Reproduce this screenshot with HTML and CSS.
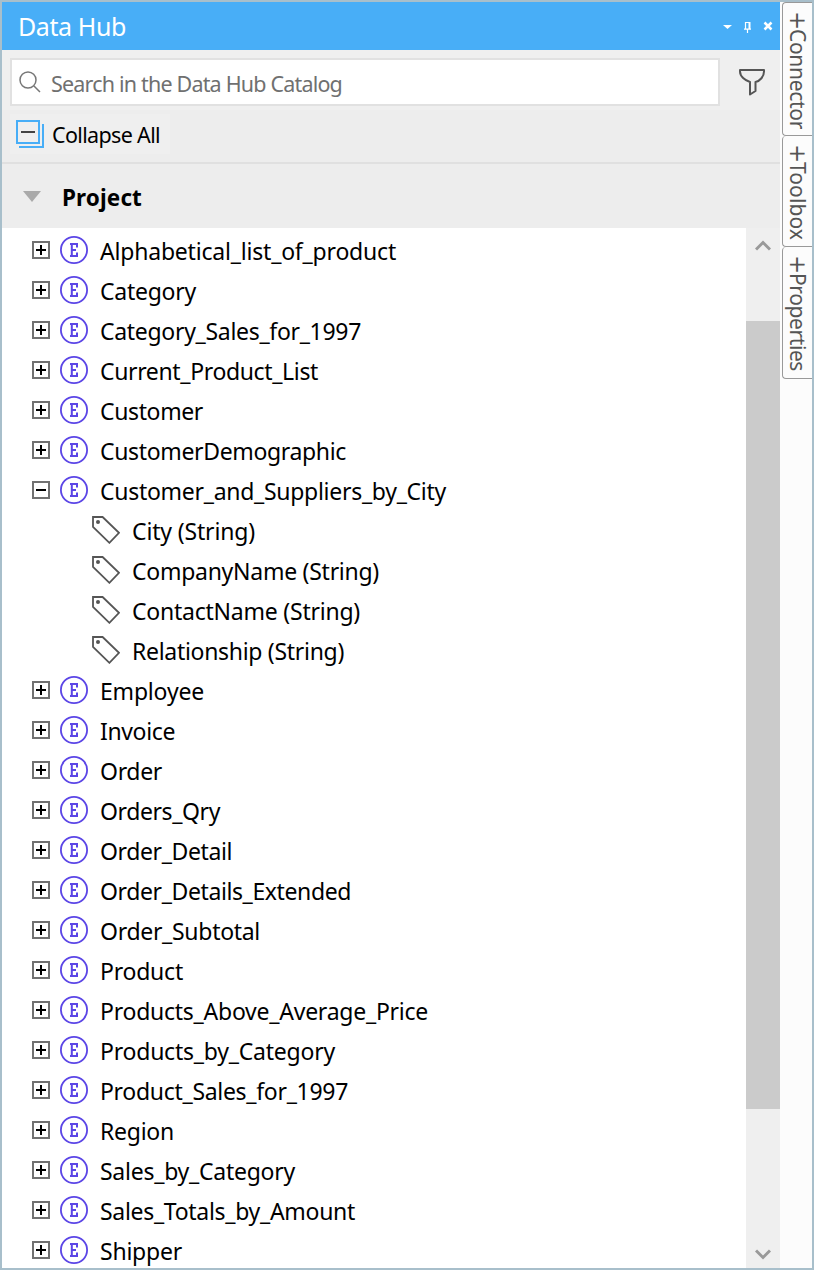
FILE: index.html
```html
<!DOCTYPE html>
<html lang="en">
<head>
<meta charset="utf-8">
<title>Data Hub</title>
<link rel="stylesheet" href="styles.css">
</head>
<body>
<svg class="defs" width="0" height="0">
  <symbol id="plus" viewBox="0 0 18 18"><path d="M1 1h16v16H1z" fill="#fff" stroke="#717171" stroke-width="2"/><path d="M4 9h10M9 4v10" stroke="#000" stroke-width="2"/></symbol>
  <symbol id="minus" viewBox="0 0 18 18"><path d="M1 1h16v16H1z" fill="#fff" stroke="#717171" stroke-width="2"/><path d="M4 9h10" stroke="#000" stroke-width="2"/></symbol>
  <symbol id="entity" viewBox="0 0 28 28"><circle cx="14" cy="14" r="13.1" fill="#fff" stroke="#5b45e6" stroke-width="1.8"/><path d="M17 11.500V8H10M17 16.500V20H10M11.800 8v12M12 14h4" fill="none" stroke="#5b45e6" stroke-width="2"/></symbol>
  <symbol id="tag" viewBox="0 0 28 28"><path d="M1 1h9.6L27 16.8 17.4 26.8 1 10.8z" fill="none" stroke="#555" stroke-width="1.8"/><circle cx="6" cy="6" r="2" fill="#555"/></symbol>
</svg>
<div class="window">
  <main class="panel">
    <header class="titlebar">
      <h1 class="title" data-width="108">Data Hub</h1>
      <svg class="controls" width="60" height="20" viewBox="0 0 60 20" fill="none" stroke="#fff"><path d="M4 10h9l-4.500 4z" fill="#fff" stroke="none"/><path d="M26.500 14V7.500h4" stroke-width="1.200"/><path d="M30.500 7v7" stroke-width="2"/><path d="M25 14.200h7M28.500 14v4" stroke-width="1.200"/><path d="M45.500 7.500l7 7M52.500 7.500l-7 7" stroke-width="2.500"/></svg>
    </header>
    <div class="search-row">
      <div class="search">
        <svg width="22" height="22" viewBox="0 0 22 22" fill="none" stroke="#777" stroke-width="1.500"><circle cx="9" cy="9" r="8"/><path d="M15 15l6 6"/></svg>
        <span class="placeholder" data-width="291">Search in the Data Hub Catalog</span>
      </div>
      <svg class="filter" width="28" height="28" viewBox="0 0 28 28" fill="none" stroke="#555" stroke-width="2" stroke-linejoin="round"><path d="M2 2h24v1.500c0 5-4 9.500-8.500 10.500v9L12 26.500V14C7 12.500 2 8.500 2 3.500z"/></svg>
    </div>
    <div class="toolbar">
      <button class="collapse">
        <svg width="28" height="28" viewBox="0 0 28 28" fill="none" stroke="#48aef7" stroke-width="2"><path d="M1 1h22v22H1zM27 4v23H3"/><path d="M5 12h14" stroke="#444"/></svg>
        <span data-width="108">Collapse All</span>
      </button>
    </div>
    <div class="section">
      <svg width="18" height="11" viewBox="0 0 18 11"><path d="M0 0h18L9 11z" fill="#aaa"/></svg>
      <h2 class="section-name" data-width="80">Project</h2>
    </div>
    <div class="content">
      <div class="tree" id="tree"></div>
      <div class="scrollbar">
        <svg width="16" height="11" viewBox="0 0 16 11" fill="none" stroke="#999" stroke-width="3"><path d="M1 9.500l7-7 7 7"/></svg>
        <div class="thumb"></div>
        <svg width="16" height="11" viewBox="0 0 16 11" fill="none" stroke="#999" stroke-width="3"><path d="M1 1.500l7 7 7-7"/></svg>
      </div>
    </div>
  </main>
  <aside class="tabs">
    <div class="tab tab-connector"><span class="add">+</span><span data-height="100">Connector</span></div>
    <div class="tab tab-toolbox"><span class="add">+</span><span data-height="78">Toolbox</span></div>
    <div class="tab tab-properties"><span class="add">+</span><span data-height="98">Properties</span></div>
  </aside>
</div>
<script src="tree.js"></script>
</body>
</html>
```
FILE: styles.css
```css
* { box-sizing: border-box; }
body { margin: 0; background: #a8bfcb; color: #000; font-family: "Noto Sans", "Open Sans", sans-serif; font-size: 23px; }
svg { display: block; flex: none; }
.defs { position: absolute; }
.window { display: flex; width: 814px; height: 1270px; border: 2px solid #a8bfcb; background: #fcfcfc; }
.panel { display: flex; flex-direction: column; width: 778px; background: #ededed; white-space: nowrap; }
.titlebar { display: flex; align-items: center; justify-content: space-between; height: 48px; flex: none; padding: 0 1px 0 16px; background: #48aef7; color: #fff; }
.title { margin: 0; font-size: 25px; font-weight: 400; line-height: 48px; }
.controls { margin-bottom: 2px; }
.search-row { display: flex; align-items: flex-start; height: 60px; flex: none; padding: 8px 14px 0 8px; background: #efefef; }
.search { display: flex; align-items: center; gap: 10px; width: 710px; height: 48px; padding-left: 7px; border: 2px solid #e1e1e1; background: #fff; }
.search svg { margin-bottom: 1px; }
.placeholder { color: #707070; font-size: 21.500px; line-height: 41px; padding-top: 3px; }
.filter { margin: 10px 0 0 18px; }
.toolbar { height: 54px; flex: none; padding: 4px 8px; border-bottom: 2px solid #e0e0e0; }
.collapse { display: flex; align-items: center; gap: 8px; width: 160px; height: 40px; padding: 0 0 0 6px; border: 0; background: #efefef; color: #000; font: 21.500px "Noto Sans", sans-serif; }
.collapse svg { margin-bottom: 1px; }
.collapse span { padding-top: 1px; }
.section { display: flex; align-items: center; gap: 21px; height: 64px; flex: none; padding-left: 21px; }
.section-name { margin: 0; padding-top: 3px; font-size: 22.500px; font-weight: 700; }
.content { display: flex; flex: 1; min-height: 0; }
.tree { width: 744px; padding-top: 2px; overflow: hidden; background: #fff; }
.node { display: flex; align-items: center; height: 40px; padding-left: 30px; }
.node .icon { margin: 0 12px 0 10px; }
.node.field { padding-left: 80px; }
.label { padding-top: 3px; line-height: 37px; }
.scrollbar { display: flex; flex-direction: column; align-items: center; width: 34px; padding: 12px 0 8px; background: #efefef; }
.thumb { width: 34px; height: 788px; margin: 70px 0 auto; background: #cbcbcb; }
.tabs { width: 32px; padding-left: 2px; }
.tab { display: flex; align-items: center; writing-mode: vertical-rl; width: 30px; padding-top: 8px; border: 1px solid #999; border-right: 0; border-radius: 4px 0 0 4px; background: #fcfcfc; color: #555; font-size: 21px; line-height: 28px; white-space: nowrap; }
.tab + .tab { border-top: 0; }
.tab-connector { height: 134px; }
.tab-toolbox { height: 111px; }
.tab-properties { height: 132px; }
.add { height: 18px; font-family: "DejaVu Sans", sans-serif; font-size: 23px; line-height: 28px; }
```
FILE: tree.js
```javascript
const entities = [
  ["Alphabetical_list_of_product", 296],
  ["Category", 96],
  ["Category_Sales_for_1997", 261],
  ["Current_Product_List", 218],
  ["Customer", 103],
  ["CustomerDemographic", 246],
  ["Customer_and_Suppliers_by_City", 346, [
    ["City (String)", 123],
    ["CompanyName (String)", 247],
    ["ContactName (String)", 228],
    ["Relationship (String)", 212]
  ]],
  ["Employee", 104],
  ["Invoice", 75],
  ["Order", 62],
  ["Orders_Qry", 120],
  ["Order_Detail", 132],
  ["Order_Details_Extended", 251],
  ["Order_Subtotal", 160],
  ["Product", 83],
  ["Products_Above_Average_Price", 328],
  ["Products_by_Category", 235],
  ["Product_Sales_for_1997", 248],
  ["Region", 74],
  ["Sales_by_Category", 195],
  ["Sales_Totals_by_Amount", 255],
  ["Shipper", 82]
];
const icon = (id, size, cls = "") => `<svg class="${cls}" width="${size}" height="${size}"><use href="#${id}"/></svg>`;
const label = (name, width) => `<span class="label" data-width="${width}">${name}</span>`;

document.getElementById("tree").innerHTML = entities.map(([name, width, fields]) =>
  `<div class="node">${icon(fields ? "minus" : "plus", 18)}${icon("entity", 28, "icon")}${label(name, width)}</div>` +
  (fields || []).map(([n, w]) => `<div class="node field">${icon("tag", 28, "icon")}${label(n, w)}</div>`).join("")
).join("");

document.querySelectorAll("[data-width], [data-height]").forEach(el => {
  const box = el.getBoundingClientRect();
  const gap = el.dataset.width ? el.dataset.width - box.width : el.dataset.height - box.height;
  el.style.letterSpacing = (gap / el.textContent.length).toFixed(3) + "px";
});
```
